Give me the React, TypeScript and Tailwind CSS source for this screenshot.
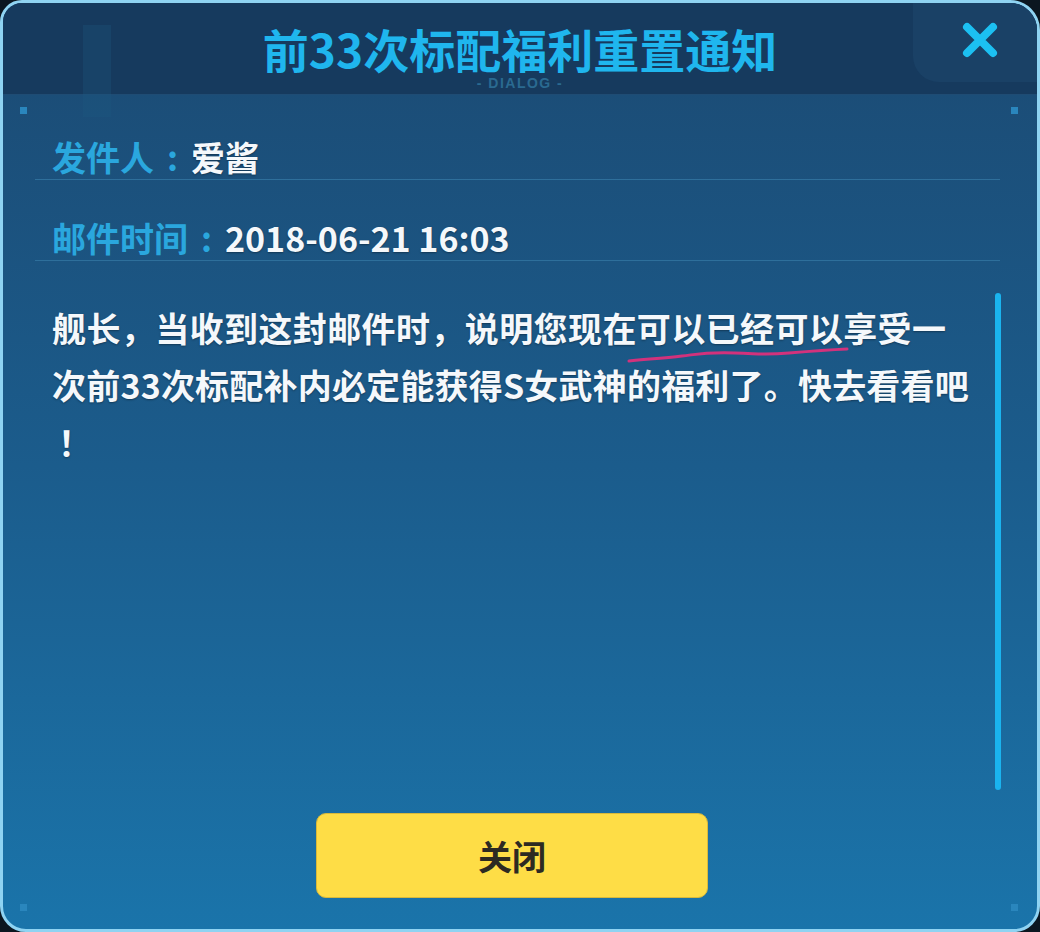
import React from "react";

const FONT = "font-['Noto_Sans_CJK_SC','Noto_Sans',sans-serif]";

function CornerDot({ className }: { className: string }) {
  return <span className={`absolute h-[7px] w-[7px] bg-[#2a86bd] ${className}`} aria-hidden />;
}

function InfoRow({ label, value, className = "" }: { label: string; value: string; className?: string }) {
  return (
    <div className={`ml-[32px] mr-[37px] border-b border-[#2e6f9b] pl-[17px] ${className}`}>
      <p className="flex text-[34px] font-bold leading-[44px]">
        <span className="text-[#2aa7de]">{label}</span>
        <span className="w-[37px] text-center text-[#2aa7de]">:</span>
        <span className="text-[#f5f8fb] [text-shadow:0_1px_2px_rgba(0,0,0,0.35)]">{value}</span>
      </p>
    </div>
  );
}

export default function App() {
  return (
    <div className={`h-[932px] w-[1040px] bg-[#0b1620] ${FONT}`}>
      <div className="relative flex h-full w-full flex-col overflow-hidden rounded-tl-[22px] rounded-tr-[30px] rounded-bl-[26px] rounded-br-[26px] border-[3px] border-[#8fd3f2] bg-gradient-to-b from-[#1b4a73] via-[#1b5c8c] to-[#1a74aa]">
        {/* header */}
        <div className="relative flex h-[92px] shrink-0 flex-col items-center border-b border-[#1f4c74] bg-[#163a5e] pt-[22px]">
          <div className="absolute left-[80px] top-[22px] h-[92px] w-[28px] bg-[#1f5a82] opacity-30" aria-hidden />
          <h1 className="relative text-[46px] font-bold leading-[46px] text-[#1fb6ee]">前33次标配福利重置通知</h1>
          <p className="relative mt-[4px] font-['Liberation_Sans',sans-serif] text-[14px] font-bold leading-[16px] tracking-[1.5px] text-[#2a6a91]">
            - DIALOG -
          </p>
          <button
            type="button"
            className="absolute right-0 top-0 flex h-[79px] w-[124px] items-center justify-center rounded-bl-[26px] bg-[#1a4166]"
            aria-label="close"
          >
            <svg width="40" height="40" viewBox="0 0 40 40" className="ml-[10px] -mt-[6px]">
              <path d="M7 7 L33 33 M33 7 L7 33" stroke="#1cc0f2" strokeWidth="8" strokeLinecap="round" />
            </svg>
          </button>
        </div>

        <CornerDot className="left-[17px] top-[104px]" />
        <CornerDot className="right-[19px] top-[104px]" />
        <CornerDot className="left-[17px] bottom-[18px]" />
        <CornerDot className="right-[19px] bottom-[18px]" />

        <InfoRow label="发件人" value="爱酱" className="mt-[40px]" />
        <InfoRow label="邮件时间" value="2018-06-21 16:03" className="mt-[36px]" />

        {/* message body */}
        <div className="mt-[32px] flex h-[497px] shrink-0 pl-[49px] pr-[36px]">
          <div className="relative min-w-0 flex-1 pt-[6px]">
            <p className="whitespace-nowrap text-[34px] font-bold leading-[57px] tracking-[0.4px] text-[#f5f8fb] [text-shadow:0_1px_2px_rgba(0,0,0,0.35)]">
              舰长，当收到这封邮件时，说明您现在可以已经可以享受一
              <br />
              <span className="tracking-[0.2px]">次前33次标配补内必定能获得S女武神的福利了。快去看看吧</span>
              <br />
              <span className="pl-[6px]">！</span>
            </p>
            <svg className="absolute left-[573px] top-[51px]" width="226" height="22" viewBox="0 0 226 22" aria-hidden>
              <path
                d="M4 17 C 25 15, 40 14, 57 12 S 80 8, 110 9 S 140 11, 164 9 S 200 6, 222 5"
                fill="none"
                stroke="#d2327c"
                strokeWidth="3"
                strokeLinecap="round"
              />
            </svg>
          </div>
          <div className="h-full w-[6px] shrink-0 rounded-full bg-[#1ab4ef]" />
        </div>

        {/* footer */}
        <div className="mt-[23px] flex justify-center pr-[16px]">
          <button
            type="button"
            className="flex h-[85px] w-[392px] items-center justify-center rounded-[10px] border border-[#d9b93a] bg-[#fedd46] text-[34px] font-bold text-[#2d2a22]"
          >
            关闭
          </button>
        </div>
      </div>
    </div>
  );
}
